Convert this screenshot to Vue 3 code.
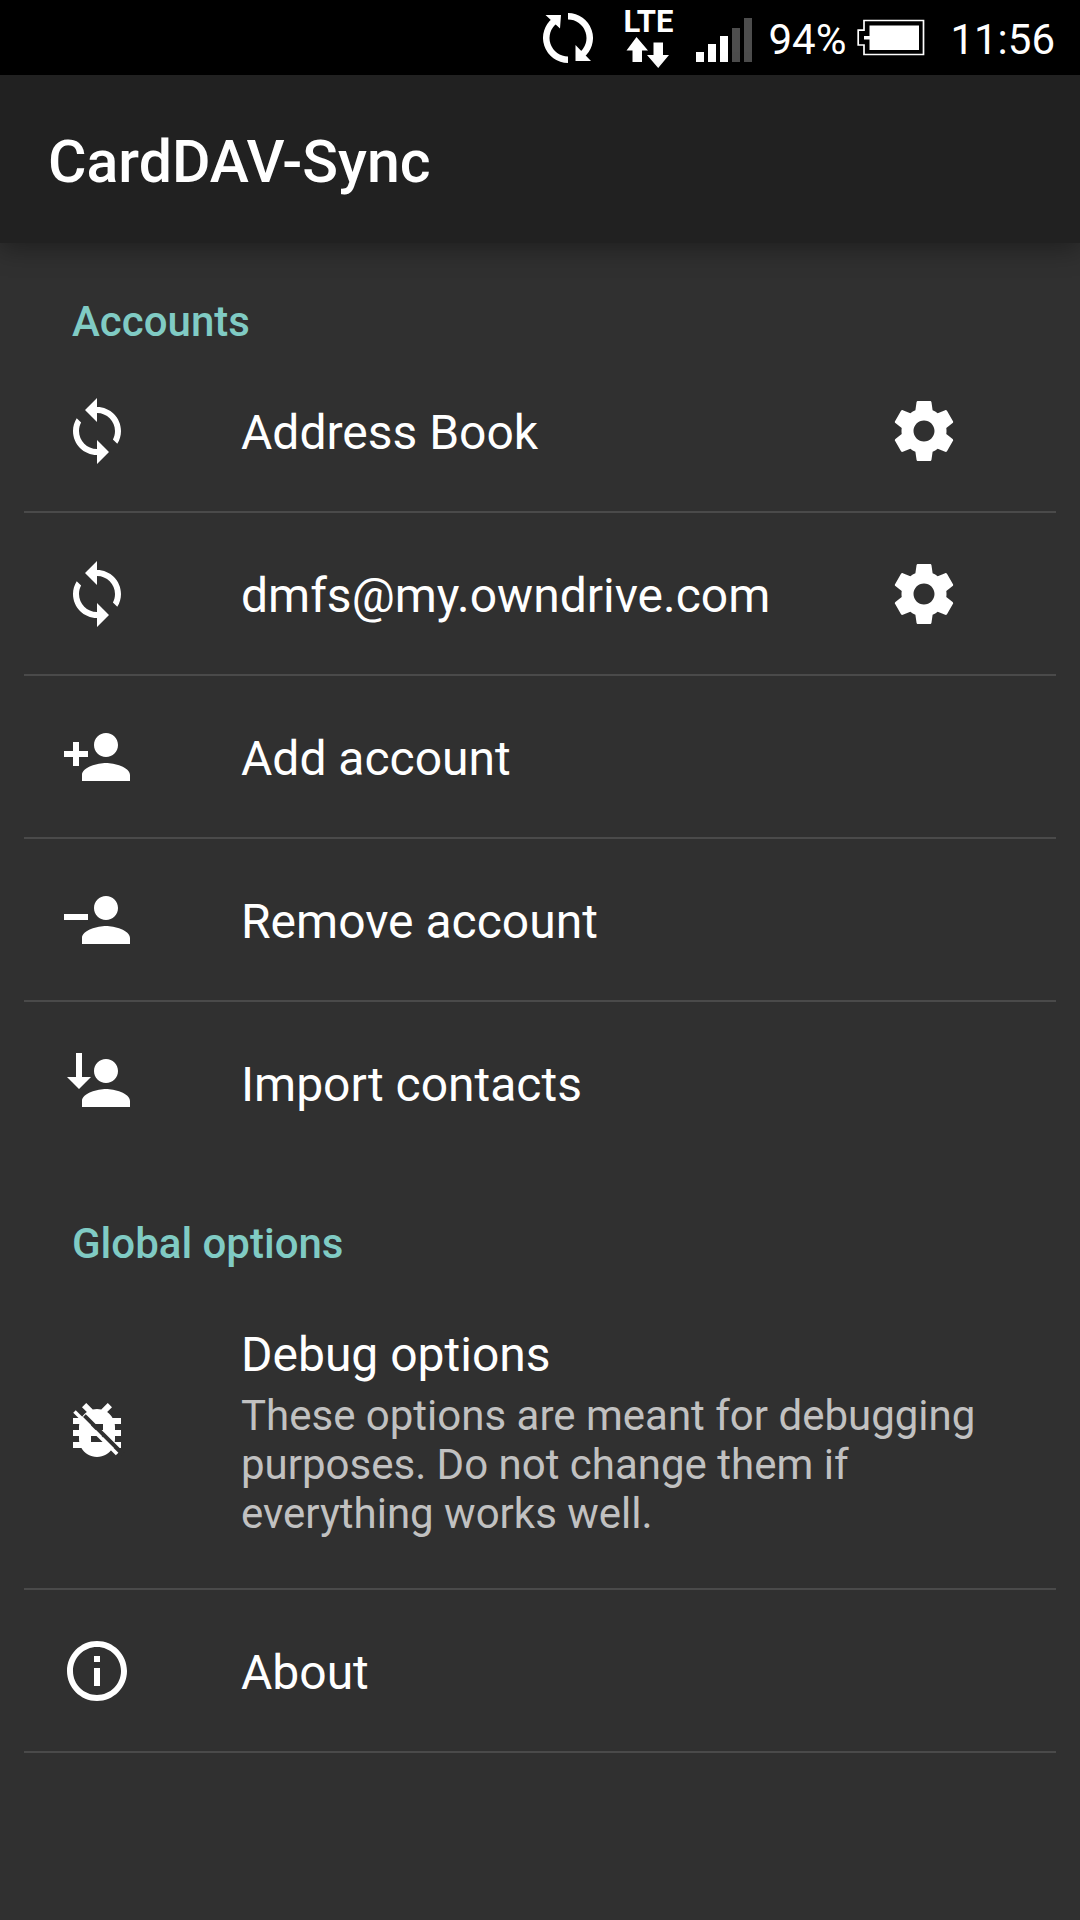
<script setup>
const person =
  'M15 12c2.21 0 4-1.79 4-4s-1.79-4-4-4-4 1.79-4 4 1.79 4 4 4zm0 2c-2.67 0-8 1.34-8 4v2h16v-2c0-2.66-5.33-4-8-4z'

const icons = {
  sync: 'M12 4V1L8 5l4 4V6c3.31 0 6 2.69 6 6 0 1.01-.25 1.97-.7 2.8l1.46 1.46C19.54 15.03 20 13.57 20 12c0-4.42-3.58-8-8-8zm0 14c-3.31 0-6-2.69-6-6 0-1.01.25-1.97.7-2.8L5.24 7.74C4.46 8.97 4 10.43 4 12c0 4.42 3.58 8 8 8v3l4-4-4-4v3z',
  add: person + 'M6 10V7H4v3H1v2h3v3h2v-3h3v-2z',
  remove: person + 'M1 10h8v2H1z',
  import: person + 'M5 2h2v8h3l-4 4-4-4h3z',
  bug: 'M20 8h-2.81c-.45-.78-1.07-1.45-1.82-1.96L17 4.41 15.59 3l-2.17 2.17C12.96 5.06 12.49 5 12 5c-.49 0-.96.06-1.41.17L8.41 3 7 4.41l1.62 1.63C7.88 6.55 7.26 7.22 6.81 8H4v2h2.09c-.05.33-.09.66-.09 1v1H4v2h2v1c0 .34.04.67.09 1H4v2h2.81c1.04 1.79 2.97 3 5.19 3s4.15-1.21 5.19-3H20v-2h-2.09c.05-.33.09-.66.09-1v-1h2v-2h-2v-1c0-.34-.04-.67-.09-1H20V8zm-6 8h-4v-2h4v2zm0-4h-4v-2h4v2z',
  info: 'M11 17h2v-6h-2v6zm1-15C6.48 2 2 6.48 2 12s4.48 10 10 10 10-4.48 10-10S17.52 2 12 2zm0 18c-4.41 0-8-3.59-8-8s3.59-8 8-8 8 3.59 8 8-3.59 8-8 8zM11 9h2V7h-2v2z',
  gear: 'M19.43 12.98c.04-.32.07-.64.07-.98s-.03-.66-.07-.98l2.11-1.65c.19-.15.24-.42.12-.64l-2-3.46c-.12-.22-.39-.3-.61-.22l-2.49 1c-.52-.4-1.08-.73-1.69-.98l-.38-2.65C14.46 2.18 14.25 2 14 2h-4c-.25 0-.46.18-.49.42l-.38 2.65c-.61.25-1.17.59-1.69.98l-2.49-1c-.23-.09-.49 0-.61.22l-2 3.46c-.13.22-.07.49.12.64l2.11 1.65c-.04.32-.07.65-.07.98s.03.66.07.98l-2.11 1.65c-.19.15-.24.42-.12.64l2 3.46c.12.22.39.3.61.22l2.49-1c.52.4 1.08.73 1.69.98l.38 2.65c.03.24.24.42.49.42h4c.25 0 .46-.18.49-.42l.38-2.65c.61-.25 1.17-.59 1.69-.98l2.49 1c.23.09.49 0 .61-.22l2-3.46c.12-.22.07-.49-.12-.64l-2.11-1.65zM12 15.5c-1.93 0-3.5-1.57-3.5-3.5s1.57-3.5 3.5-3.5 3.5 1.57 3.5 3.5-1.57 3.5-3.5 3.5z',
}

const sections = [
  {
    title: 'Accounts',
    rows: [
      { icon: 'sync', label: 'Address Book', settings: true },
      { icon: 'sync', label: 'dmfs@my.owndrive.com', settings: true },
      { icon: 'add', label: 'Add account' },
      { icon: 'remove', label: 'Remove account' },
      { icon: 'import', label: 'Import contacts', last: true },
    ],
  },
  {
    title: 'Global options',
    rows: [
      {
        icon: 'bug',
        label: 'Debug options',
        summary:
          'These options are meant for debugging purposes. Do not change them if everything works well.',
      },
      { icon: 'info', label: 'About' },
    ],
  },
]
</script>

<template>
  <div class="screen">
    <div class="status">
      <svg class="s-sync" viewBox="0 0 50 50" aria-hidden="true">
        <g fill="none" stroke="#fff" stroke-width="6.5">
          <path d="M25 46.7A21.7 21.7 0 0 1 12 7.6" />
          <path d="M25 3.3A21.7 21.7 0 0 1 38 42.4" />
        </g>
        <path fill="#fff" d="M2.5 2H18l-1 13.500zM32.500 32v16h15.500z" />
      </svg>
      <div class="s-lte">
        <span class="lte-text">LTE</span>
        <svg viewBox="0 0 50 32" aria-hidden="true">
          <path
            fill="#fff"
            d="M13.500 0L25 13.500h-6V25H9.500V13.500h-6zM30.500 5.500h9.500V18h6L35.200 31 24 18h6.500z"
          />
        </svg>
      </div>
      <svg class="s-signal" viewBox="0 0 56 75" aria-hidden="true">
        <path fill="#fff" d="M0 52h8v10H0zM12 44h8v18h-8zM24 36h8v26h-8z" />
        <path fill="#4d4d4d" d="M36 28h8v34h-8zM48 18h8v44h-8z" />
      </svg>
      <span class="percent">94%</span>
      <svg class="s-battery" viewBox="0 0 68 75" aria-hidden="true">
        <path fill="none" stroke="#fff" stroke-width="1.700" d="M7 20.500h59.500v34H7v-9.500H1.200V30.200H7z" />
        <path fill="#fff" d="M12.500 25.500H62V50H12.500V39.500H7v-3.500h5.500z" />
      </svg>
      <time class="clock">11:56</time>
    </div>

    <header class="bar">
      <h1>CardDAV-Sync</h1>
    </header>

    <main>
      <section v-for="section in sections" :key="section.title">
        <h2>{{ section.title }}</h2>
        <ul>
          <li v-for="row in section.rows" :key="row.label" :class="{ last: row.last }">
            <button type="button" class="entry">
              <svg class="icon" viewBox="0 0 24 24" aria-hidden="true">
                <path :d="icons[row.icon]" />
                <template v-if="row.icon === 'bug'">
                  <path class="cut" d="M7.800 7.200L20.600 20" />
                  <path class="slash" d="M4.500 5.800L18.700 20" />
                </template>
              </svg>
              <span class="text">
                <span class="label">{{ row.label }}</span>
                <span v-if="row.summary" class="summary">{{ row.summary }}</span>
              </span>
            </button>
            <button
              v-if="row.settings"
              type="button"
              class="settings"
              :aria-label="'Settings for ' + row.label"
            >
              <svg class="icon" viewBox="0 0 24 24" aria-hidden="true">
                <path :d="icons.gear" />
              </svg>
            </button>
          </li>
        </ul>
      </section>
    </main>
  </div>
</template>

<style>
body {
  margin: 0;
  background: #303030;
}
</style>

<style scoped>
.screen {
  min-height: 100vh;
  background: #303030;
  color: #fff;
  font-family: Roboto, 'Noto Sans', sans-serif;
}

.status {
  display: flex;
  align-items: center;
  justify-content: flex-end;
  height: 75px;
  padding-right: 25px;
  background: #000;
  font-size: 42px;
  line-height: 48px;
}

.status svg {
  flex: none;
  height: 75px;
}

.status .s-sync {
  width: 50px;
  height: 50px;
  margin-right: 30px;
}

.s-lte {
  display: flex;
  flex-direction: column;
  align-items: center;
  width: 50px;
  margin-right: 23px;
}

.status .s-lte svg {
  width: 50px;
  height: 32px;
}

.lte-text {
  font: bold 31px/31px Roboto, 'Noto Sans', sans-serif;
}

.s-signal {
  width: 56px;
  margin-right: 16px;
}

.s-battery {
  width: 68px;
  margin: 0 25px 0 11px;
}

.percent,
.clock {
  padding-top: 4px;
}

.bar {
  position: relative;
  display: flex;
  align-items: center;
  box-sizing: border-box;
  height: 168px;
  padding: 5px 48px 0;
  background: #212121;
  box-shadow: 0 6px 24px rgba(0, 0, 0, 0.35);
}

h1 {
  margin: 0;
  font-size: 59px;
  font-weight: 500;
  line-height: 72px;
}

h2 {
  display: flex;
  align-items: flex-end;
  box-sizing: border-box;
  height: 107px;
  margin: 0;
  padding: 0 72px 4px;
  color: #80cbc4;
  font-size: 42px;
  font-weight: 500;
  line-height: 48px;
}

ul {
  margin: 0;
  padding: 0 24px;
  list-style: none;
}

li {
  display: flex;
  border-bottom: 2px solid #4a4a4a;
}

li.last {
  border-color: transparent;
}

button {
  padding: 0;
  border: 0;
  background: none;
  color: inherit;
  font: inherit;
  text-align: left;
}

.entry {
  display: flex;
  flex: 1;
  align-items: center;
  min-width: 0;
  min-height: 161px;
  padding: 0 48px 0 37px;
}

.icon {
  flex: none;
  width: 72px;
  height: 72px;
  fill: #fff;
}

.cut,
.slash {
  fill: none;
  stroke: #fff;
  stroke-width: 1.2;
}

.cut {
  stroke: #303030;
  stroke-width: 1.3;
}

.text {
  display: flex;
  flex-direction: column;
  gap: 8px;
  margin-left: 108px;
  padding: 55px 0 50px;
}

.label {
  font-size: 48px;
  line-height: 56px;
}

.summary {
  color: #c1c1c1;
  font-size: 42px;
  line-height: 49px;
}

.settings {
  display: flex;
  align-items: center;
  padding: 0 96px 0 24px;
}
</style>
